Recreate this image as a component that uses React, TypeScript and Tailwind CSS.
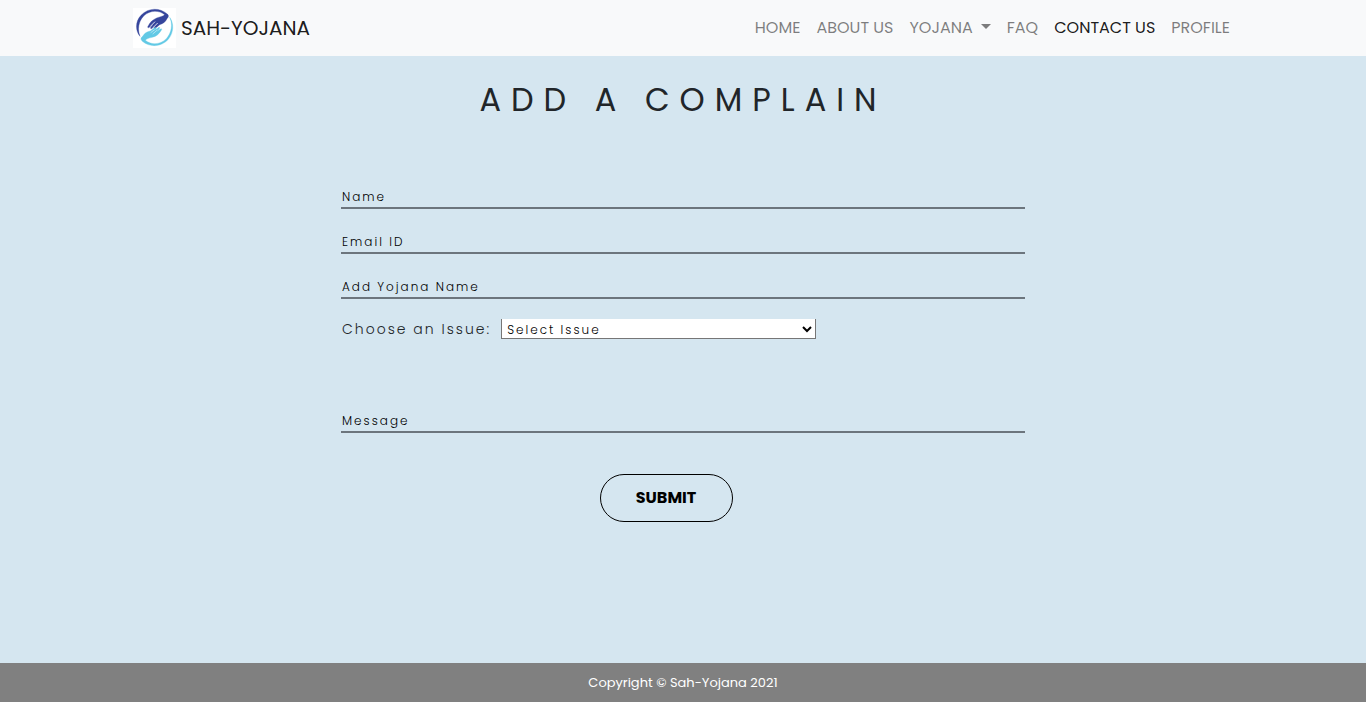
import React from "react";

function Logo() {
  return (
    <svg viewBox="39 24 129 120" className="h-10 w-[43px] bg-white" aria-hidden="true">
      <path
        d="M60 109C46 92 45 65 63 46C84 23 119 21 143 43C147 47 145 52 141 56C137 65 130 71 119 74L107 84C103 86 101 83 104 79L108 75L96 85C92 88 90 84 93 81L100 73L88 82C84 85 81 82 85 77C90 66 99 59 110 54C120 50 130 49 134 44C117 30 90 30 71 48C55 65 52 89 60 109Z"
        fill="#35459c"
        stroke="#35459c"
        strokeWidth="1"
      />
      <path d="M91 79L105 65M100 82L113 69" fill="none" stroke="#ffffff" strokeWidth="2.5" />
      <path
        d="M149 52C162 69 162 98 145 118C125 140 91 144 67 124C61 118 62 113 68 109C73 100 80 95 91 93L104 83C108 81 110 84 107 88L101 94L115 83C119 80 121 83 117 87L110 95L120 88C125 84 127 87 123 92C117 102 109 109 97 112C86 114 79 117 76 121C95 137 122 133 139 116C155 98 159 73 149 52Z"
        fill="#62c9e5"
        stroke="#62c9e5"
        strokeWidth="1"
      />
      <path d="M98 102L112 90M92 98L104 89" fill="none" stroke="#ffffff" strokeWidth="1.5" />
    </svg>
  );
}

const links = ["HOME", "ABOUT US", "YOJANA", "FAQ", "CONTACT US", "PROFILE"];

function Field({ id, label, type = "text" }: { id: string; label: string; type?: string }) {
  return (
    <input
      id={id}
      type={type}
      aria-label={label}
      placeholder={label}
      className="block h-6 w-full border-b-2 border-[#6c757d] bg-transparent px-px pt-0.5 text-xs tracking-[2px] text-black outline-none placeholder:text-black placeholder:opacity-100"
    />
  );
}

export default function App() {
  return (
    <div className="flex min-h-screen flex-col bg-[#d5e6f0] font-['Poppins','Inter',sans-serif] font-light text-[#212529]">
      <header className="bg-[#f8f9fa]">
        <nav className="mx-auto flex h-14 max-w-[1110px] items-center justify-between">
          <a href="#home" className="ml-[5px] flex items-center gap-[5px] text-xl font-normal text-black/90">
            <Logo />
            SAH-YOJANA
          </a>
          <ul className="flex font-normal">
            {links.map((label) => (
              <li key={label}>
                <a
                  href={"#" + label.toLowerCase().replace(" ", "-")}
                  className={
                    label === "CONTACT US"
                      ? "flex items-center px-2 text-black/90"
                      : "flex items-center px-2 text-black/50"
                  }
                >
                  {label}
                  {label === "YOJANA" && (
                    <svg viewBox="0 0 10 5" className="mb-1 ml-2 h-[5px] w-[10px] fill-current" aria-hidden="true">
                      <path d="M0 0H10L5 5Z" />
                    </svg>
                  )}
                </a>
              </li>
            ))}
          </ul>
        </nav>
      </header>

      <main className="mx-auto w-full max-w-[1140px] flex-1">
        <h1 className="pt-5 text-center text-[32px] leading-12 font-normal tracking-[10px]">ADD A COMPLAIN</h1>
        <form className="mx-auto w-3/5 pt-[61px]" onSubmit={(e) => e.preventDefault()}>
          <div className="grid gap-[21px]">
            <Field id="name" label="Name" />
            <Field id="email" label="Email ID" type="email" />
            <Field id="yojana" label="Add Yojana Name" />
          </div>
          <div className="flex items-center gap-2.5 pt-5">
            <label htmlFor="issue" className="pl-px text-sm leading-5 tracking-[2px] whitespace-nowrap">
              Choose an Issue:
            </label>
            <select
              id="issue"
              className="h-5 w-[315px] border border-t-0 border-[#767676] bg-white pt-px pl-px text-xs tracking-[2px] text-black"
            >
              <option>Select Issue</option>
            </select>
          </div>
          <div className="pt-[70px]">
            <Field id="message" label="Message" />
          </div>
          <div className="flex justify-center pt-[41px] pr-[34px]">
            <button
              type="submit"
              className="h-12 w-[133px] rounded-full border border-black text-base font-bold text-black"
            >
              SUBMIT
            </button>
          </div>
        </form>
      </main>

      <footer className="bg-[#808080] py-[9px] text-center text-[13px] leading-[21px] font-normal text-white">
        Copyright © Sah-Yojana 2021
      </footer>
    </div>
  );
}
